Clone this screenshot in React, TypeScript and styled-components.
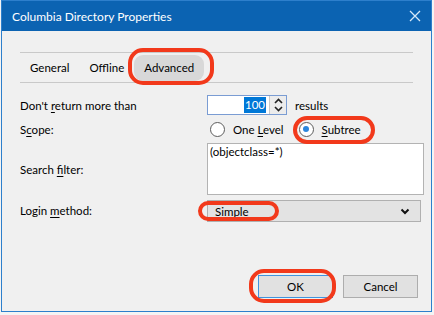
import React, { FC, ReactNode } from "react";
import styled, { createGlobalStyle } from "styled-components";

const GlobalStyle = createGlobalStyle`
  html, body {
    margin: 0;
    padding: 0;
    background: #f4f4f4;
  }
  body {
    font-family: "Lato", "Segoe UI", sans-serif;
    font-size: 11.5px;
    color: #000;
  }
`;

type Inset = { t: number; r: number; b: number; l: number };

const Highlight: FC<{ inset: Inset; children: ReactNode }> = ({ inset, children }) => (
  <Marked $t={inset.t} $r={inset.r} $b={inset.b} $l={inset.l}>
    {children}
  </Marked>
);

const CloseIcon = () => (
  <svg width="12" height="12" viewBox="0 0 12 12">
    <path d="M1 1 L11 11 M11 1 L1 11" stroke="#d6e8f8" strokeWidth="1.3" fill="none" />
  </svg>
);

const Chevron = ({ dir }: { dir: "up" | "down" }) => (
  <svg width="9" height="6" viewBox="0 0 9 6">
    <path
      d={dir === "up" ? "M1 5 L4.5 1.5 L8 5" : "M1 1 L4.5 4.5 L8 1"}
      stroke="#222"
      strokeWidth="1.6"
      fill="none"
    />
  </svg>
);

export default function App() {
  return (
    <>
      <GlobalStyle />
      <Window>
        <TitleBar>
          <Title>Columbia Directory Properties</Title>
          <CloseButton>
            <CloseIcon />
          </CloseButton>
        </TitleBar>
        <Body>
          <TabStrip>
            <Tab>General</Tab>
            <Tab>Offline</Tab>
            <Highlight inset={{ t: 7, r: 10, b: 4, l: 6 }}>
              <Tab $active>Advanced</Tab>
            </Highlight>
          </TabStrip>

          <Form>
            <Label>
              Don't <u>r</u>eturn more than
            </Label>
            <Inline>
              <SpinBox>
                <SpinValue>
                  <Selected>100</Selected>
                </SpinValue>
                <SpinButtons>
                  <Chevron dir="up" />
                  <Chevron dir="down" />
                </SpinButtons>
              </SpinBox>
              <span>results</span>
            </Inline>

            <Label>
              S<u>c</u>ope:
            </Label>
            <RadioGroup>
              <RadioOption>
                <RadioCircle />
                <span>
                  One <u>L</u>evel
                </span>
              </RadioOption>
              <Highlight inset={{ t: 6, r: 14, b: 7, l: 6 }}>
                <RadioOption>
                  <RadioCircle $checked />
                  <span>
                    <u>S</u>ubtree
                  </span>
                </RadioOption>
              </Highlight>
            </RadioGroup>

            <Label>
              Search <u>f</u>ilter:
            </Label>
            <FilterBox>(objectclass=*)</FilterBox>

            <Label>
              Login <u>m</u>ethod:
            </Label>
            <Select>
              <Highlight inset={{ t: 4, r: 30, b: 3, l: 17 }}>
                <span>Simple</span>
              </Highlight>
              <svg width="10" height="7" viewBox="0 0 10 7">
                <path d="M1.5 1.5 L5 5 L8.5 1.5" stroke="#111" strokeWidth="2" fill="none" />
              </svg>
            </Select>
          </Form>

          <Footer>
            <Highlight inset={{ t: 6, r: 3, b: 5, l: 9 }}>
              <DialogButton $primary>OK</DialogButton>
            </Highlight>
            <DialogButton>Cancel</DialogButton>
          </Footer>
        </Body>
      </Window>
    </>
  );
}

const Window = styled.div`
  box-sizing: border-box;
  width: 431px;
  height: 312px;
  margin-left: 1px;
  border: 1px solid #2d7fcc;
  background: #f0f0f0;
  display: flex;
  flex-direction: column;
`;

const TitleBar = styled.div`
  height: 30px;
  flex-shrink: 0;
  background: #0b63b2;
  display: flex;
  align-items: center;
  justify-content: space-between;
  padding: 0 9px 0 10px;
`;

const Title = styled.span`
  color: #fff;
  font-size: 12px;
`;

const CloseButton = styled.span`
  display: flex;
  align-items: center;
  justify-content: center;
  width: 14px;
  height: 14px;
`;

const Body = styled.div`
  flex: 1;
  display: flex;
  flex-direction: column;
  padding: 21px 7px 13px 18px;
`;

const Marked = styled.span<{ $t: number; $r: number; $b: number; $l: number }>`
  position: relative;
  display: inline-flex;
  &::after {
    content: "";
    position: absolute;
    top: ${({ $t }) => -$t}px;
    right: ${({ $r }) => -$r}px;
    bottom: ${({ $b }) => -$b}px;
    left: ${({ $l }) => -$l}px;
    border: 4px solid #f2391b;
    border-radius: 15px;
    pointer-events: none;
  }
`;

const TabStrip = styled.div`
  height: 29px;
  margin-right: 11px;
  border-top: 1px solid #c9c9c9;
  border-bottom: 1px solid #c9c9c9;
  display: flex;
  align-items: center;
`;

const Tab = styled.span<{ $active?: boolean }>`
  display: flex;
  align-items: center;
  height: 26px;
  padding: 0 10px;
  border-radius: 9px;
  background: ${({ $active }) => ($active ? "#d8d8d8" : "transparent")};
`;

const Form = styled.div`
  margin-top: 12px;
  display: grid;
  grid-template-columns: 187px 1fr;
  grid-auto-rows: auto;
  row-gap: 4px;
  align-items: center;
`;

const Label = styled.span`
  u {
    text-underline-offset: 2px;
  }
`;

const Inline = styled.div`
  display: flex;
  align-items: center;
  gap: 8px;
`;

const SpinBox = styled.div`
  box-sizing: border-box;
  width: 80px;
  height: 20px;
  border: 1px solid #7a9cd3;
  background: #fff;
  display: flex;
`;

const SpinValue = styled.div`
  flex: 1;
  display: flex;
  align-items: center;
  justify-content: flex-end;
  padding-right: 3px;
`;

const Selected = styled.span`
  background: #0078d7;
  color: #fff;
  line-height: 16px;
  padding: 0 1px;
`;

const SpinButtons = styled.div`
  width: 16px;
  border-left: 1px solid #c8c8c8;
  background: #ececec;
  display: flex;
  flex-direction: column;
  align-items: center;
  justify-content: space-around;
  padding: 1px 0;
`;

const RadioGroup = styled.div`
  height: 20px;
  display: flex;
  align-items: center;
  gap: 15px;
  padding-left: 3px;
`;

const RadioOption = styled.label`
  display: flex;
  align-items: center;
  gap: 8px;
  u {
    text-underline-offset: 2px;
  }
`;

const RadioCircle = styled.span<{ $checked?: boolean }>`
  box-sizing: border-box;
  width: 15px;
  height: 15px;
  border-radius: 50%;
  border: 1px solid #5c5c5c;
  background: #fff;
  display: flex;
  align-items: center;
  justify-content: center;
  &::after {
    content: "";
    width: 6px;
    height: 6px;
    border-radius: 50%;
    background: ${({ $checked }) => ($checked ? "#2b86dd" : "transparent")};
  }
`;

const FilterBox = styled.div`
  box-sizing: border-box;
  height: 52px;
  border: 1px solid #b3b3b3;
  background: #fff;
  padding: 1px 2px;
`;

const Select = styled.div`
  box-sizing: border-box;
  height: 22px;
  margin-top: 1px;
  margin-right: 3px;
  border: 1px solid #b0b0b0;
  background: #e3e3e3;
  display: flex;
  align-items: center;
  justify-content: space-between;
  padding: 0 10px 0 7px;
`;

const Footer = styled.div`
  margin-top: auto;
  display: flex;
  justify-content: flex-end;
  gap: 10px;
  padding-right: 6px;
`;

const DialogButton = styled.button<{ $primary?: boolean }>`
  box-sizing: border-box;
  width: 75px;
  height: 23px;
  font-family: inherit;
  font-size: 11.5px;
  color: #000;
  background: #e1e1e1;
  border: 1px solid ${({ $primary }) => ($primary ? "#3f93de" : "#adadad")};
  padding: 0;
`;
